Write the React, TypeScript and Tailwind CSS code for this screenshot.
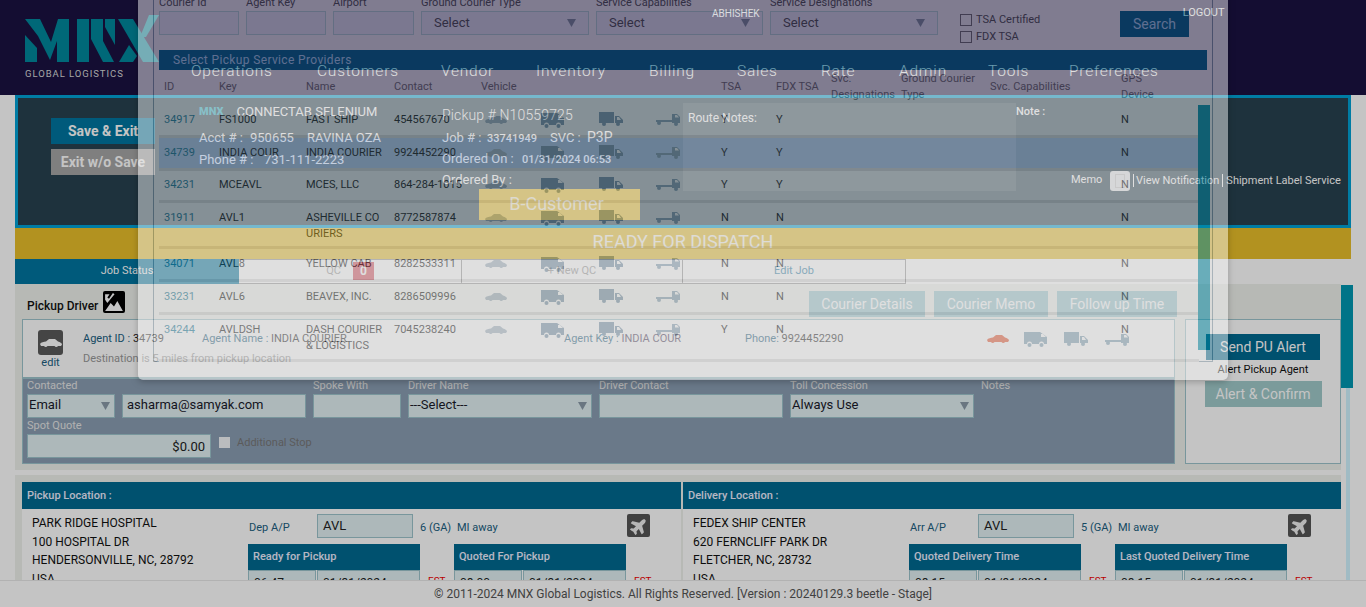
import { FaPlane } from 'react-icons/fa'

const sans = "[font-family:Roboto,'Liberation_Sans',sans-serif]"

type Row = {
    id: string
    key: string
    name: string
    contact: string
    tsa: string
    fdx: string
    gps: string
    h: string
    active?: boolean
}

const rows: Row[] = [
    { id: '34917', key: 'FS1000', name: 'FAST SHIP', contact: '454567670', tsa: 'Y', fdx: 'Y', gps: 'N', h: 'h-[35px] pt-[9px]' },
    { id: '34739', key: 'INDIA COUR', name: 'INDIA COURIER', contact: '9924452290', tsa: 'Y', fdx: 'Y', gps: 'N', h: 'h-[33px] pt-[7px]', active: true },
    { id: '34231', key: 'MCEAVL', name: 'MCES, LLC', contact: '864-284-1015', tsa: 'Y', fdx: 'Y', gps: 'N', h: 'h-[32px] pt-[6px]' },
    { id: '31911', key: 'AVL1', name: 'ASHEVILLE COURIERS', contact: '8772587874', tsa: 'N', fdx: 'N', gps: 'N', h: 'h-[46px] pt-[7px]' },
    { id: '34071', key: 'AVL8', name: 'YELLOW CAB', contact: '8282533311', tsa: 'N', fdx: 'N', gps: 'N', h: 'h-[33px] pt-[7px]' },
    { id: '33231', key: 'AVL6', name: 'BEAVEX, INC.', contact: '8286509996', tsa: 'N', fdx: 'N', gps: 'N', h: 'h-[33px] pt-[7px]' },
    { id: '34244', key: 'AVLDSH', name: 'DASH COURIER & LOGISTICS', contact: '7045238240', tsa: 'Y', fdx: 'N', gps: 'N', h: 'h-[47px] pt-[7px]' },
]

const navItems = [
    { label: 'Operations', w: 'w-[126px]' },
    { label: 'Customers', w: 'w-[124px]' },
    { label: 'Vendor', w: 'w-[95px]' },
    { label: 'Inventory', w: 'w-[113px]' },
    { label: 'Billing', w: 'w-[88px]' },
    { label: 'Sales', w: 'w-[84px]' },
    { label: 'Rate', w: 'w-[78px]' },
    { label: 'Admin', w: 'w-[89px]' },
    { label: 'Tools', w: 'w-[81px]' },
    { label: 'Preferences', w: 'w-[100px]' },
]

function Logo() {
    return (
        <svg width="136" height="48" viewBox="0 0 136 48" className="block">
            <g fill="#00889c">
                <polygon points="0,20 12,33 12,47 0,47" />
                <polygon points="0,4 15,4 26,27 33,4 44,4 44,47 32,47 32,26 25,45 13,21" />
                <polygon points="52,4 64,4 64,47 52,47" />
                <polygon points="66,4 78,4 78,26 89,47 78,47 66,24" />
                <polygon points="80,4 90,4 90,30 80,12" />
                <polygon points="93,4 108,4 134,47 118,47" />
                <polygon points="94,47 104,30 112,41 108,47" />
                <polygon points="115,22 124,0 134,0 121,22" />
            </g>
        </svg>
    )
}

function Car({ className }: { className?: string }) {
    return (
        <svg width="22" height="10" viewBox="0 0 22 10" className={className} fill="currentColor">
            <path d="M0 6 C1 4 4 4 6 3.500 L9 1 H15 L18 3.500 C20 4 22 5 22 6.500 L21 8 H18 A2 2 0 0 1 14.500 8 H7.500 A2 2 0 0 1 4 8 H1 Z" />
        </svg>
    )
}

function Van({ className }: { className?: string }) {
    return (
        <svg width="24" height="16" viewBox="0 0 24 16" className={className} fill="currentColor">
            <path d="M0 1 H16 L23 6 V13 H20 A2.500 2.500 0 0 0 15 13 H8 A2.500 2.500 0 0 0 3 13 H0 Z" />
            <circle cx="5.500" cy="14" r="2" />
            <circle cx="17.500" cy="14" r="2" />
            <path d="M17 3 H19 L22 6 H17 Z" fill="#ffffff" />
        </svg>
    )
}

function Truck({ className }: { className?: string }) {
    return (
        <svg width="24" height="14" viewBox="0 0 24 14" className={className} fill="currentColor">
            <path d="M0 0 H15 V11 H0 Z" />
            <path d="M16 4 H20 L24 8 V11 H16 Z" />
            <circle cx="5" cy="12" r="2" />
            <circle cx="19" cy="12" r="2" />
            <path d="M18 5 H20 L22 8 H18 Z" fill="#ffffff" />
        </svg>
    )
}

function Flatbed({ className }: { className?: string }) {
    return (
        <svg width="24" height="14" viewBox="0 0 24 14" className={className} fill="currentColor">
            <path d="M0 8 H16 V10 H0 Z" />
            <path d="M16 2 H21 L24 5 V11 H16 Z" />
            <circle cx="3" cy="11" r="2" />
            <circle cx="20" cy="12" r="2" />
            <path d="M19 3 H21 L23 5.500 H19 Z" fill="#ffffff" />
        </svg>
    )
}

function Arrow() {
    return (
        <svg width="9" height="8" viewBox="0 0 9 8" className="shrink-0" fill="#8a9aa8">
            <polygon points="0,0 9,0 4.500,8" />
        </svg>
    )
}

function Field({ w, value, select }: { w: string; value?: string; select?: boolean }) {
    return (
        <div className={`${w} h-[24px] shrink-0 border border-[#9cc4cc] bg-[#e1f0f3] flex items-center justify-between text-[13px] leading-none text-[#1a1a2a] ${select ? 'pl-[1px] pr-[4px]' : 'px-[4px]'}`}>
            <span className="pb-[3px]">{value}</span>
            {select && <Arrow />}
        </div>
    )
}

function Labeled({ label, className, children }: { label: string; className: string; children: React.ReactNode }) {
    return (
        <div className={`${className} shrink-0 flex flex-col`}>
            <div className="h-[15px] text-[11px] leading-[14px] text-[#e6e6e6]">{label}</div>
            {children}
        </div>
    )
}

function TimeGroup({ title, time, date }: { title: string; time: string; date: string }) {
    return (
        <div className="flex w-[206px]">
            <div className="w-[172px]">
                <div className="h-[26px] bg-[#006a91] px-[5px] flex items-center text-[11px] font-medium text-[#eef] whitespace-nowrap">{title}</div>
                <div className="flex gap-px">
                    <div className="w-[68px] h-[24px] bg-[#e1f0f3] border border-[#9cc4cc] px-[5px] pt-[3px] text-[12px] text-[#222]">{time}</div>
                    <div className="flex-1 h-[24px] bg-[#e1f0f3] border border-[#9cc4cc] px-[5px] pt-[3px] text-[12px] text-[#222]">{date}</div>
                </div>
            </div>
            <div className="ml-[8px] mt-[30px] text-[10px] text-[#f00000]">EST</div>
        </div>
    )
}

function LocationCard({ title, lines, label, airport, ga, groups, width }: {
    title: string
    lines: string[]
    label: string
    airport: string
    ga: string
    groups: { title: string; time: string; date: string }[]
    width: string
}) {
    return (
        <div className={`${width} shrink-0 bg-white`}>
            <div className="h-[27px] bg-[#006a91] px-[5px] pt-[1px] flex items-center text-[11px] font-medium text-[#eef]">{title}</div>
            <div className="flex">
                <div className="w-[226px] shrink-0 pl-[10px] pt-[5px] text-[12px] leading-[18.500px] text-[#111]">
                    {lines.map((l) => (
                        <div key={l}>{l}</div>
                    ))}
                </div>
                <div className="flex-1">
                    <div className="flex h-[35px] items-start pt-[5px] text-[11px] text-[#20607f]">
                        <div className="w-[69px] pt-[6px] pl-px">{label}</div>
                        <div className="w-[96px] h-[24px] bg-[#e1f0f3] border border-[#9cc4cc] px-[5px] text-[13px] leading-[21px] text-[#222]">{airport}</div>
                        <div className="ml-[7px] w-[37px] pt-[6px]">{ga}</div>
                        <div className="w-[170px] pt-[6px]">MI away</div>
                        <div className="w-[23px] h-[23px] rounded-[2px] bg-[#555] flex items-center justify-center">
                            <FaPlane className="text-[#eee] text-[18px] -rotate-45" />
                        </div>
                    </div>
                    <div className="flex">
                        {groups.map((g) => (
                            <TimeGroup key={g.title} {...g} />
                        ))}
                    </div>
                </div>
            </div>
        </div>
    )
}

function JobPanel() {
    return (
        <div className="h-[133px] border-[3px] border-[#00a2d6] bg-[#284150] flex text-white">
            <div className="w-[104px] ml-[33px] pt-[20px] flex flex-col gap-[5px] shrink-0">
                <div className="h-[26px] bg-[#0075a0] flex items-center justify-center text-[14px] font-bold">Save &amp; Exit</div>
                <div className="h-[26px] bg-[#a6a6a6] flex items-center justify-center text-[14px] font-bold">Exit w/o Save</div>
            </div>
            <div className="w-[243px] ml-[44px] shrink-0 text-[13px] pt-[6px]">
                <div className="flex items-center h-[16px] gap-[15px]">
                    <span className="text-[11px] font-black text-[#2db4c8]">MNX</span>
                    <span className="text-[13px] -ml-[2px]">CONNECTAB SELENIUM</span>
                </div>
                <div className="mt-[8px] flex"><span className="w-[51px]">Acct # :</span><span className="w-[57px]">950655</span><span>RAVINA OZA</span></div>
                <div className="mt-[2px] flex"><span className="w-[65px]">Phone # :</span><span>731-111-2223</span></div>
            </div>
            <div className="w-[241px] shrink-0 pt-[8px] text-[13px]">
                <div className="text-[14px] font-light tracking-[.01em] leading-[18px]">Pickup # N10559725</div>
                <div className="mt-[3px] flex items-baseline h-[18px]">
                    <span className="w-[45px]">Job # :</span>
                    <span className="w-[63px] text-[11px] font-medium">33741949</span>
                    <span className="w-[37px]">SVC :</span>
                    <span className="text-[14px]">P3P</span>
                </div>
                <div className="mt-[4px] flex items-baseline">
                    <span className="w-[80px]">Ordered On :</span>
                    <span className="text-[11px] font-medium">01/31/2024 06:53</span>
                </div>
                <div className="mt-[1px]">Ordered By :</div>
                <div className="ml-[37px] w-[161px] h-[31px] pb-[3px] pr-[6px] bg-[#e8be2a] flex items-center justify-center text-[18px] text-[#ffffffd0]">B-Customer</div>
            </div>
            <div className="w-[333px] h-[88px] mt-[5px] shrink-0 bg-white/10 pl-[5px] pt-[6px] text-[12px]">Route Notes:</div>
            <div className="flex-1 relative flex flex-col pt-[6px] text-[11px] font-medium">
                <div>Note :</div>
                <div className="mt-[50px] ml-[55px] flex items-center text-[11px] font-normal whitespace-nowrap">
                    <span className="w-[39px]">Memo</span>
                    <div className="w-[20px] h-[20px] rounded-[3px] bg-white/90 mr-[3px] shrink-0 flex items-center justify-center">
                        <div className="w-[10px] h-[14px] border border-[#ccc]" />
                    </div>
                    <span className="border-l border-white pl-[2px] leading-[13px]">View Notification</span>
                    <span className="ml-[3px] border-l border-white pl-[3px] leading-[13px]">Shipment Label Service</span>
                </div>
            </div>
        </div>
    )
}

function Tabs() {
    return (
        <div className="flex h-[25px] text-[11px]">
            <div className="w-[224px] bg-[#0075a0] text-white flex items-center justify-center">Job Status</div>
            <div className="w-[222px] bg-white border-y border-[#999] relative flex items-center justify-center pr-[33px] text-[#999]">
                QC
                <span className="absolute left-[114px] top-[2px] w-[21px] h-[18px] bg-[#d8505f] text-white font-bold text-[12px] flex items-center justify-center">0</span>
            </div>
            <div className="w-[222px] bg-white border border-[#999] flex items-center justify-center text-[#999]">+ New QC</div>
            <div className="w-[223px] bg-white border-y border-r border-[#999] flex items-center justify-center text-[#2b7ea8]">Edit Job</div>
        </div>
    )
}

function PickupDriver() {
    return (
        <div className="w-[1326px] h-[186px] bg-[#eff1ec] pl-[7px]">
            <div className="h-[35px] flex">
                <div className="flex items-start pl-[5px] w-[787px]">
                    <span className="mt-[13px] text-[12px] font-medium text-[#111] w-[76px]">Pickup Driver</span>
                    <div className="mt-[7px] w-[22px] h-[22px] rounded-[2px] bg-black flex items-center justify-center">
                        <svg width="20" height="20" viewBox="0 0 18 18" fill="#fff">
                            <path d="M1 2 H5 L3 5 L4.500 6 L8 1 L9.500 2 L3 10 L1 7 Z" />
                            <path d="M1 17 L6 10 L9 13 L12 8 L17 17 Z" />
                        </svg>
                    </div>
                </div>
                <div className="flex gap-[9px] pt-[7px] text-[14px] text-white">
                    <div className="w-[116px] h-[26px] bg-[#9ac8d1] flex items-center justify-center">Courier Details</div>
                    <div className="w-[114px] h-[26px] bg-[#9ac8d1] flex items-center justify-center">Courier Memo</div>
                    <div className="w-[120px] h-[26px] bg-[#9ac8d1] flex items-center justify-center">Follow up Time</div>
                </div>
            </div>
            <div className="flex gap-[10px]">
                <div className="w-[1153px] shrink-0">
                    <div className="h-[59px] bg-white border border-[#9cc4cc] flex pl-[15px] text-[11px] text-[#20607f]">
                        <div className="w-[45px] pt-[10px] shrink-0">
                            <div className="w-[25px] h-[25px] rounded-[3px] bg-[#5a5a5a] flex items-center justify-center">
                                <Car className="text-white" />
                            </div>
                            <div className="mt-[1px] text-center w-[25px] text-[#20607f] leading-[14px]">edit</div>
                        </div>
                        <div className="flex-1 pt-[12px]">
                            <div className="flex h-[14px] items-center whitespace-nowrap">
                                <span className="w-[119px]">Agent ID : <span className="text-[#222]">34739</span></span>
                                <span className="w-[362px]">Agent Name : <span className="text-[#222]">INDIA COURIER</span></span>
                                <span className="w-[181px]">Agent Key : <span className="text-[#4a3a5a]">INDIA COUR</span></span>
                                <span className="w-[242px]">Phone: <span className="text-[#222]">9924452290</span></span>
                                <Car className="text-[#e8502a] w-[22px] mr-[15px]" />
                                <Van className="text-[#7f9fb4] mr-[16px]" />
                                <Truck className="text-[#7f9fb4] mr-[17px]" />
                                <Flatbed className="text-[#7f9fb4]" />
                            </div>
                            <div className="mt-[5px] text-[#999]">Destination is 5 miles from pickup location</div>
                        </div>
                    </div>
                    <div className="h-[86px] bg-[#8b9eb3] border border-[#9cc4cc] pl-[4px]">
                        <div className="flex gap-[7px]">
                            <Labeled label="Contacted" className="w-[88px]"><Field w="w-[88px]" value="Email" select /></Labeled>
                            <Labeled label="" className="w-[184px]"><Field w="w-[184px]" value="asharma@samyak.com" /></Labeled>
                            <Labeled label="Spoke With" className="w-[88px]"><Field w="w-[88px]" /></Labeled>
                            <Labeled label="Driver Name" className="w-[184px]"><Field w="w-[184px]" value="---Select---" select /></Labeled>
                            <Labeled label="Driver Contact" className="w-[184px]"><Field w="w-[184px]" /></Labeled>
                            <Labeled label="Toll Concession" className="w-[184px]"><Field w="w-[184px]" value="Always Use" select /></Labeled>
                            <Labeled label="Notes" className="w-[100px]"><span /></Labeled>
                        </div>
                        <div className="flex mt-[1px]">
                            <Labeled label="Spot Quote" className="w-[192px]">
                                <div className="w-[184px] h-[24px] bg-[#e1f0f3] border border-[#9cc4cc] px-[5px] text-right text-[13px] leading-[24px] text-[#222]">$0.00</div>
                            </Labeled>
                            <div className="flex pt-[18px] items-start">
                                <div className="w-[11px] h-[11px] bg-white/90 mr-[7px]" />
                                <span className="text-[11px] leading-[12px] text-[#777]">Additional Stop</span>
                            </div>
                        </div>
                    </div>
                </div>
                <div className="w-[156px] h-[145px] shrink-0 bg-white border border-[#9cc4cc] flex flex-col items-center pt-[14px]">
                    <div className="w-[114px] h-[26px] bg-[#006a91] text-white text-[14px] flex items-center justify-center">Send PU Alert</div>
                    <div className="mt-[3px] text-[11px] leading-[13px] text-[#111] whitespace-nowrap">Alert Pickup Agent</div>
                    <div className="mt-[5px] w-[117px] h-[26px] bg-[#a0caca] text-white text-[14px] flex items-center justify-center">Alert &amp; Confirm</div>
                </div>
            </div>
        </div>
    )
}

function Locations() {
    return (
        <div className="mt-[5px] w-[1326px] bg-[#eff1ec] pt-[7px] pl-[7px] flex gap-[2px]">
            <LocationCard
                width="w-[659px]"
                title="Pickup Location :"
                lines={['PARK RIDGE HOSPITAL', '100 HOSPITAL DR', 'HENDERSONVILLE, NC, 28792', 'USA']}
                label="Dep A/P"
                airport="AVL"
                ga="6 (GA)"
                groups={[
                    { title: 'Ready for Pickup', time: '06:47', date: '01/31/2024' },
                    { title: 'Quoted For Pickup', time: '08:00', date: '01/31/2024' },
                ]}
            />
            <LocationCard
                width="w-[658px]"
                title="Delivery Location :"
                lines={['FEDEX SHIP CENTER', '620 FERNCLIFF PARK DR', 'FLETCHER, NC, 28732', 'USA']}
                label="Arr A/P"
                airport="AVL"
                ga="5 (GA)"
                groups={[
                    { title: 'Quoted Delivery Time', time: '08:15', date: '01/31/2024' },
                    { title: 'Last Quoted Delivery Time', time: '08:15', date: '01/31/2024' },
                ]}
            />
        </div>
    )
}

function FilterField({ label, w, select }: { label: string; w: string; select?: boolean }) {
    return (
        <div className={`${w} shrink-0`}>
            <div className="h-[15px] text-[11px] leading-[14px] text-[#555] whitespace-nowrap">{label}</div>
            <div className="h-[24px] bg-[#f4f6ff] border border-[#c0e0e0] flex items-center justify-between px-[12px] text-[13px] text-[#555]">
                {select && <span>Select</span>}
                {select && <Arrow />}
            </div>
        </div>
    )
}

function ProviderModal() {
    return (
        <div className="absolute left-[138px] top-[-9px] w-[1090px] h-[389px] overflow-hidden rounded-b-[5px] bg-white opacity-[.46] shadow-[0_2px_6px_rgba(0,0,0,.5)]">
            <div className="ml-[15px] w-[1060px] h-[371px] border border-[#8aa0b0] border-t-0 pl-[5px]">
                <div className="flex gap-[7px] pt-[5px] h-[59px]">
                    <FilterField label="Courier Id" w="w-[80px]" />
                    <FilterField label="Agent Key" w="w-[80px]" />
                    <FilterField label="Airport" w="w-[81px]" />
                    <FilterField label="Ground Courier Type" w="w-[168px]" select />
                    <FilterField label="Service Capabilities" w="w-[167px]" select />
                    <FilterField label="Service Designations" w="w-[168px]" select />
                    <div className="ml-[15px] w-[153px] pt-[15px] text-[11px] text-[#555] leading-[17px]">
                        <div className="flex items-center gap-[4px]"><span className="w-[12px] h-[12px] border border-[#777]" />TSA Certified</div>
                        <div className="flex items-center gap-[4px]"><span className="w-[12px] h-[12px] border border-[#777]" />FDX TSA</div>
                    </div>
                    <div className="mt-[15px] w-[69px] h-[26px] bg-[#006d95] text-[#b7e0ff] text-[14px] flex items-center justify-center">Search</div>
                </div>
                <div className="w-[1048px] h-[20px] bg-[#006d95] pl-[14px] flex items-center text-[12px] tracking-[.03em] text-[#b7e0ff]">Select Pickup Service Providers</div>
                <div className="grid grid-cols-[55px_87px_88px_87px_240px_55px_55px_70px_89px_131px_76px] h-[33px] text-[11px] leading-[16px] text-[#777]">
                    <div className="pl-[5px] self-center">ID</div>
                    <div className="pl-[5px] self-center">Key</div>
                    <div className="pl-[5px] self-center">Name</div>
                    <div className="pl-[5px] self-center">Contact</div>
                    <div className="pl-[5px] self-center">Vehicle</div>
                    <div className="pl-[5px] self-center">TSA</div>
                    <div className="pl-[5px] self-center">FDX TSA</div>
                    <div className="pl-[5px] self-center">Svc. Designations</div>
                    <div className="pl-[5px] self-center">Ground Courier Type</div>
                    <div className="pl-[5px] self-center">Svc. Capabilities</div>
                    <div className="pl-[5px] self-center">GPS<br />Device</div>
                </div>
                {rows.map((r) => (
                    <div key={r.id} className={`grid grid-cols-[55px_87px_88px_87px_240px_55px_55px_70px_89px_131px_76px] ${r.h} border-b-[3px] border-[#e0e0e0] w-[1040px] text-[11px] leading-[16px] text-[#222] ${r.active ? 'bg-[#c4dcff]' : ''}`}>
                        <div className="pl-[5px] text-[#1f7fa0]">{r.id}</div>
                        <div className="pl-[5px]">{r.key}</div>
                        <div className="pl-[5px] pr-[5px] break-all">{r.name}</div>
                        <div className="pl-[5px] whitespace-nowrap">{r.contact}</div>
                        <div className="pl-[9px] flex items-start text-[#7f9ab0]">
                            <Car className="mt-[3px] mr-[34px] text-[#a8b8c6]" />
                            <Van className="mr-[34px] shrink-0" />
                            <Truck className="mr-[33px] shrink-0" />
                            <Flatbed className="shrink-0 text-[#8fa8bc]" />
                        </div>
                        <div className="pl-[5px]">{r.tsa}</div>
                        <div className="pl-[5px]">{r.fdx}</div>
                        <div />
                        <div />
                        <div />
                        <div className="pl-[5px]">{r.gps}</div>
                    </div>
                ))}
            </div>
            <div className="absolute left-[1060px] top-[114px] w-[12px] h-[245px] bg-[#0094b0]" />
        </div>
    )
}

export default function App() {
    return (
        <div className={`relative w-[1366px] h-[607px] overflow-hidden bg-white flex flex-col ${sans}`}>
            <header className="h-[95px] shrink-0 bg-[#1a1242] flex text-white">
                <div className="w-[191px] shrink-0 pl-[25px] pt-[15px]">
                    <Logo />
                    <div className="mt-[4px] text-[9.500px] tracking-[.1em] text-[#d8d8d8]">GLOBAL LOGISTICS</div>
                </div>
                <div className="flex-1 flex flex-col">
                    <div className="flex pt-[5px] h-[62px] items-start text-[10px]">
                        <span className="ml-[521px] mt-[1px]">ABHISHEK</span>
                        <span className="ml-[423px] text-[11px]">LOGOUT</span>
                    </div>
                    <nav className="flex text-[15.500px] font-light tracking-[.05em] leading-[18px]">
                        {navItems.map((n) => (
                            <span key={n.label} className={n.w}>{n.label}</span>
                        ))}
                    </nav>
                </div>
            </header>
            <main className="flex-1 min-h-0 overflow-hidden px-[15px]">
                <JobPanel />
                <div className="h-[31px] pb-[4px] bg-[#e8be2a] flex items-center justify-center text-[18px] text-white/90">READY FOR DISPATCH</div>
                <Tabs />
                <PickupDriver />
                <Locations />
            </main>
            <footer className="h-[27px] shrink-0 border-t border-[#e8e8e8] bg-white flex items-center justify-center text-[12px] text-[#555]">
                © 2011-2024 MNX Global Logistics. All Rights Reserved. [Version : 20240129.3 beetle - Stage]
            </footer>
            <div className="absolute left-[1346px] top-[285px] w-[4px] h-[295px] bg-[#d0f4ff]" />
            <div className="absolute left-[1341px] top-[285px] w-[12px] h-[103px] bg-[#0098b1]" />
            <div className="absolute inset-0 bg-black/[.23]" />
            <ProviderModal />
        </div>
    )
}
